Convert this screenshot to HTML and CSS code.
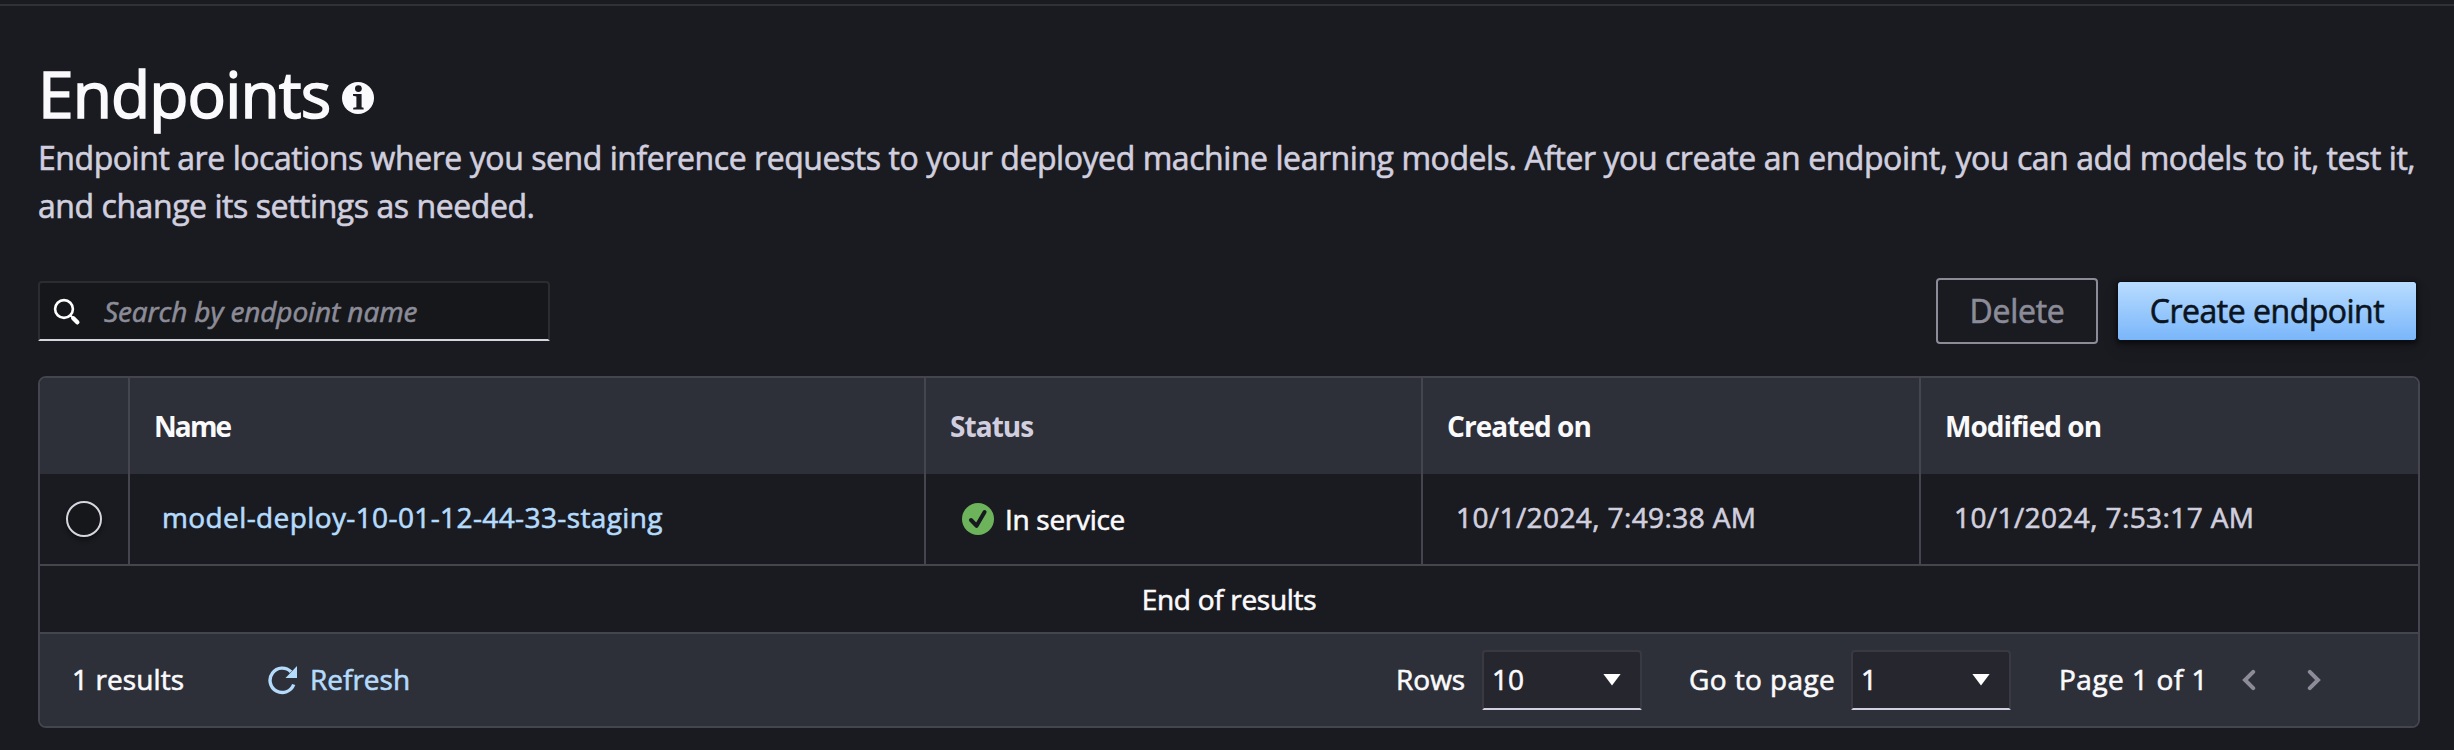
FILE: index.html
```html
<!DOCTYPE html>
<html lang="en">
<head>
<meta charset="utf-8">
<title>Endpoints</title>
<link rel="stylesheet" href="styles.css">
</head>
<body>
<main class="page">
  <header class="heading">
    <h1 class="title">Endpoints</h1>
    <svg class="info" viewBox="0 0 32 32"><circle cx="16" cy="16" r="16" fill="#fafafc"/><circle cx="16.4" cy="6.6" r="3.4" fill="#1a1b20"/><path d="M11 12h8.600v13.200l2 .5v1.700H11.200v-1.700l3.200-.5V14.400L11 13.700z" fill="#1a1b20"/></svg>
  </header>
  <p class="description">Endpoint are locations where you send inference requests to your deployed machine learning models. After you create an endpoint, you can add models to it, test it,<br>and change its settings as needed.</p>

  <div class="toolbar">
    <div class="search">
      <svg class="search-icon" viewBox="0 0 28 28"><circle cx="11" cy="11" r="8.900" fill="none" stroke="#fff" stroke-width="2.600"/><path d="M17.300 17.300l2 2" stroke="#fff" stroke-width="2"/><path d="M20.300 20.300l4 4" stroke="#fff" stroke-width="4.400" stroke-linecap="round"/></svg>
      <span class="placeholder">Search by endpoint name</span>
    </div>
    <div class="actions">
      <button class="btn btn-delete">Delete</button>
      <button class="btn btn-create">Create endpoint</button>
    </div>
  </div>

  <section class="table">
    <div class="row head">
      <div class="cell"></div>
      <div class="cell name-head">Name</div>
      <div class="cell muted">Status</div>
      <div class="cell">Created on</div>
      <div class="cell">Modified on</div>
    </div>
    <div class="row item">
      <div class="cell pick"><span class="radio"></span></div>
      <div class="cell link">model-deploy-10-01-12-44-33-staging</div>
      <div class="cell status">
        <svg class="check" viewBox="0 0 32 32"><circle cx="16" cy="16" r="16" fill="#6cb35c"/><path d="M9 17l5.600 5.800L22.600 9" fill="none" stroke="#16191d" stroke-width="4" stroke-linecap="round" stroke-linejoin="round"/></svg>
        <span>In service</span>
      </div>
      <div class="cell date">10/1/2024, 7:49:38 AM</div>
      <div class="cell date">10/1/2024, 7:53:17 AM</div>
    </div>
    <div class="end">End of results</div>
    <footer class="footer">
      <span class="count">1 results</span>
      <span class="refresh">
        <svg class="refresh-icon" viewBox="0 0 30 30"><path d="M23 6.800A12.200 12.200 0 1 0 25.700 19.500" fill="none" stroke="#b5dbfc" stroke-width="3.400"/><path d="M29 1v12H17.500z" fill="#b5dbfc"/></svg>
        <span class="label">Refresh</span>
      </span>
      <div class="pager">
        <span class="label rows-label">Rows</span>
        <div class="select"><span class="label">10</span><i class="caret"></i></div>
        <span class="label goto-label">Go to page</span>
        <div class="select"><span class="label">1</span><i class="caret"></i></div>
        <span class="label page-label">Page 1 of 1</span>
        <svg class="chevron prev" viewBox="0 0 14 22"><path d="M11.200 2.800L3 11l8.200 8.200" fill="none" stroke="#8c8c99" stroke-width="4" stroke-linecap="round"/></svg>
        <svg class="chevron" viewBox="0 0 14 22"><path d="M2.800 2.800L11 11l-8.200 8.200" fill="none" stroke="#8c8c99" stroke-width="4" stroke-linecap="round"/></svg>
      </div>
    </footer>
  </section>
</main>
</body>
</html>
```
FILE: styles.css
```css
* { box-sizing: border-box; }
body {
  margin: 0;
  background: #1a1b20;
  color: #fafafc;
  font: 500 28px/40px "Open Sans", "Noto Sans", sans-serif;
  -webkit-text-stroke: 0.6px currentColor;
}
svg { display: block; flex: none; }
.page {
  margin-top: 4px;
  height: 746px;
  border-top: 2px solid #303137;
  padding: 48px 34px 0 38px;
  overflow: hidden;
}
.heading { display: flex; align-items: flex-start; }
.title {
  margin: 0;
  width: 304px;
  font-size: 64px;
  line-height: 80px;
  font-weight: 500;
  letter-spacing: -0.9px;
  -webkit-text-stroke-width: 1.6px;
  white-space: nowrap;
}
.info { width: 32px; height: 32px; margin-top: 28px; }
.description {
  margin: 0;
  font-size: 32px;
  line-height: 48px;
  letter-spacing: -0.44px;
  color: #d1cfdf;
  white-space: nowrap;
}
.toolbar {
  display: flex;
  justify-content: space-between;
  align-items: flex-start;
  margin-top: 48px;
  height: 98px;
  padding-right: 4px;
}
.search {
  display: flex;
  align-items: center;
  width: 512px;
  height: 60px;
  margin-top: 3px;
  padding-left: 14px;
  background: #16171a;
  border: 2px solid #2b2b30;
  border-bottom-color: #d6d5df;
  border-radius: 4px 4px 0 0;
}
.search-icon { width: 28px; height: 28px; margin: 1px 23px 0 -1px; }
.placeholder { padding-bottom: 1px; font-style: italic; letter-spacing: -0.1px; color: #8c8c99; white-space: nowrap; }
.actions { display: flex; gap: 19px; align-items: center; }
.btn {
  padding: 0;
  font: inherit;
  font-size: 32px;
  line-height: 40px;
  -webkit-text-stroke: inherit;
  -webkit-text-stroke: 0.6px currentColor;
  white-space: nowrap;
}
.btn-delete {
  width: 162px;
  height: 66px;
  background: none;
  border: 2px solid #8c8c99;
  border-radius: 4px;
  color: #8c8c99;
  letter-spacing: -0.3px;
}
.btn-create {
  width: 300px;
  height: 60px;
  margin-right: -1px;
  border: 1px solid #0d0f14;
  border-radius: 3px;
  background: linear-gradient(#b8dcff, #7ab6fa);
  background-clip: padding-box;
  color: #0b1420;
  letter-spacing: -0.5px;
  box-shadow: 0 2px 5px #08090c, 0 8px 16px rgba(0, 0, 0, 0.12);
}
.table {
  width: 2382px;
  height: 352px;
  border: 2px solid #454550;
  border-radius: 8px;
  overflow: hidden;
}
.row { display: grid; grid-template-columns: 90px 796px 497px 498px 1fr; }
.cell {
  display: flex;
  align-items: center;
  border-right: 2px solid #454550;
  padding-left: 24px;
  white-space: nowrap;
}
.cell:last-child { border-right: 0; }
.head {
  height: 96px;
  background: #2e3039;
  font-weight: 700;
  letter-spacing: -0.95px;
  -webkit-text-stroke-width: 0;
}
.name-head { letter-spacing: -1.9px; }
.muted { color: #d1cfdf; }
.item { height: 92px; border-bottom: 2px solid #454550; }
.item .cell { padding-bottom: 4px; padding-left: 32px; }
.item .pick { padding: 0 0 0 26px; }
.item .link { color: #b5dbfc; letter-spacing: 0.39px; }
.item .status { padding: 0 0 0 36px; gap: 11px; letter-spacing: -0.3px; }
.item .status span { padding-bottom: 1px; }
.item .date { color: #d1cfdf; letter-spacing: 0.4px; padding-left: 33px; }
.radio {
  width: 36px;
  height: 36px;
  border: 2px solid #d6d5df;
  border-radius: 50%;
  background: #16171a;
  box-shadow: 0 3px 5px rgba(0, 0, 0, 0.45);
}
.check { width: 32px; height: 32px; }
.end {
  display: flex;
  align-items: center;
  justify-content: center;
  height: 68px;
  padding-bottom: 1px;
  border-bottom: 2px solid #454550;
  letter-spacing: -0.3px;
}
.footer { display: flex; align-items: center; height: 92px; background: #2e3039; white-space: nowrap; }
.label { padding-bottom: 2px; }
.count { width: 228px; padding: 0 0 2px 32px; letter-spacing: 0.1px; }
.refresh { display: flex; align-items: center; gap: 12px; color: #b5dbfc; }
.refresh-icon { width: 30px; height: 30px; }
.pager { display: flex; align-items: center; margin-left: auto; padding-right: 97px; }
.rows-label { width: 86px; }
.select {
  display: flex;
  align-items: center;
  justify-content: space-between;
  width: 160px;
  height: 60px;
  padding: 0 19px 0 8px;
  background: #26262e;
  border: 2px solid #393941;
  border-bottom-color: #d1d0e0;
  border-radius: 4px 4px 0 0;
}
.caret {
  width: 18px;
  height: 12px;
  margin-top: -1px;
  background: #fff;
  clip-path: polygon(0 0, 100% 0, 50% 100%);
}
.goto-label { width: 209px; padding-left: 47px; letter-spacing: 0.4px; }
.page-label { width: 231px; padding-left: 48px; letter-spacing: 0.5px; }
.chevron { width: 14px; height: 22px; }
.prev { margin-right: 51px; }
```
